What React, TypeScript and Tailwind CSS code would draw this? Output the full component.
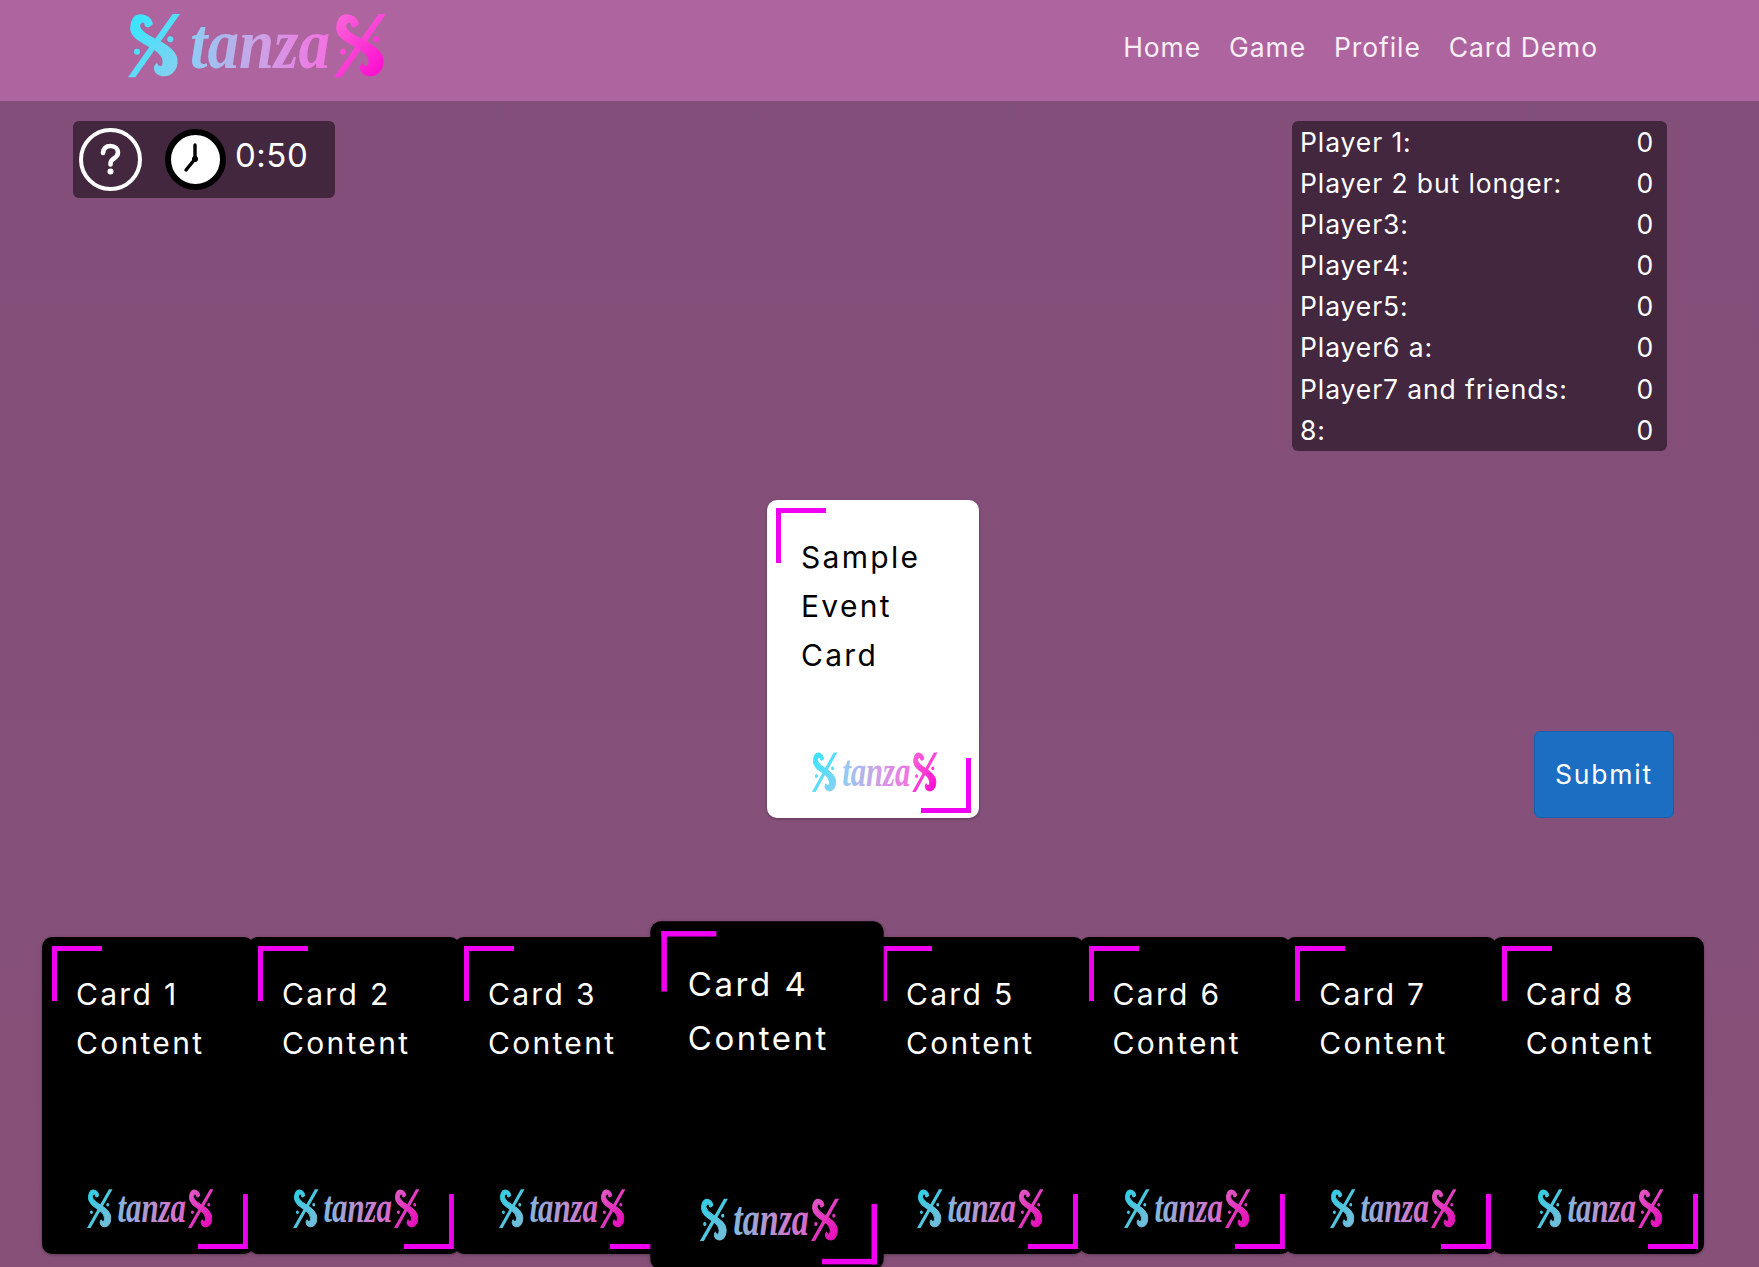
import React, { useId } from "react";

const players: [string, number][] = [
  ["Player 1:", 0],
  ["Player 2 but longer:", 0],
  ["Player3:", 0],
  ["Player4:", 0],
  ["Player5:", 0],
  ["Player6 a:", 0],
  ["Player7 and friends:", 0],
  ["8:", 0],
];

function Sigil({ x, fill }: { x: number; fill: string }) {
  return (
    <g transform={`translate(${x} 0) scale(0.3333)`} fill={fill}>
      <polygon points="134,0 156,0 22,190 0,190" />
      <circle cx="127" cy="76" r="9" />
      <circle cx="27" cy="113" r="9" />
      <path
        transform="translate(-16 -12)"
        stroke={fill}
        strokeWidth="5"
        strokeLinejoin="round"
        d="M88 42 C86 26 70 14 52 15 C34 16 24 36 25 56 C26 84 66 100 96 118 C114 130 126 142 122 162 C120 174 106 174 102 162 C92 172 94 190 118 196 C142 200 164 180 162 150 C160 122 128 104 96 88 C76 78 52 66 50 50 C48 38 62 30 68 40 C66 50 76 54 88 42 Z"
      />
    </g>
  );
}

function Logo({ className }: { className: string }) {
  const id = useId();
  return (
    <svg viewBox="0 -12 259 88" preserveAspectRatio="none" className={className}>
      <defs>
        <linearGradient id={`${id}a`} gradientUnits="userSpaceOnUse" x1="0" y1="20" x2="156" y2="170">
          <stop offset="0" stopColor="#2ee8ff" />
          <stop offset="1" stopColor="#7fd2f2" />
        </linearGradient>
        <linearGradient id={`${id}b`} gradientUnits="userSpaceOnUse" x1="62" y1="0" x2="202" y2="0">
          <stop offset="0" stopColor="#8ecdf4" />
          <stop offset="0.5" stopColor="#cda2e6" />
          <stop offset="1" stopColor="#f470e2" />
        </linearGradient>
        <linearGradient id={`${id}c`} gradientUnits="userSpaceOnUse" x1="0" y1="20" x2="156" y2="170">
          <stop offset="0" stopColor="#fb6cdc" />
          <stop offset="1" stopColor="#ff12d0" />
        </linearGradient>
      </defs>
      <Sigil x={0} fill={`url(#${id}a)`} />
      <Sigil x={206} fill={`url(#${id}c)`} />
      <text
        x="62"
        y="54"
        fill={`url(#${id}b)`}
        fontFamily="'Liberation Serif', serif"
        fontStyle="italic"
        fontWeight="700"
        fontSize="72"
        textLength="140"
        lengthAdjust="spacingAndGlyphs"
      >
        tanza
      </text>
    </svg>
  );
}

function Bracket({ className }: { className: string }) {
  return <div className={`absolute w-[50px] h-[55px] border-[#f000f0] ${className}`} />;
}

function Card({ n, className = "" }: { n: number; className?: string }) {
  return (
    <div
      className={`relative shrink-0 w-[212px] h-[317px] rounded-[10px] bg-black text-white pl-[34px] pt-[33px] shadow-[0_1px_3px_rgba(0,0,0,0.3)] ${className}`}
    >
      <Bracket className="left-[10px] top-[9px] border-l-[5px] border-t-[5px]" />
      <p className="text-[30px] tracking-[2.3px] leading-[49px] w-[165px]">Card {n} Content</p>
      <Logo className="absolute left-[45px] top-[244.7px] w-[127px] h-[53.6px] opacity-90" />
      <Bracket className="right-[6px] bottom-[5px] border-r-[5px] border-b-[5px]" />
    </div>
  );
}

export default function App() {
  return (
    <div
      className="h-screen overflow-hidden flex flex-col bg-gradient-to-b from-[#824f7a] to-[#865078] text-white"
      style={{ fontFamily: "Inter, 'Liberation Sans', sans-serif" }}
    >
      <header className="h-[101px] shrink-0 bg-[#ae649e] flex items-start justify-between pl-[128px] pr-[161px]">
        <Logo className="mt-[2px] w-[259px] h-[88px]" />
        <nav className="flex gap-[28px] pt-[28px] text-[26.5px] tracking-[0.9px] leading-[38px] text-[#f8eef6]">
          <a>Home</a>
          <a>Game</a>
          <a>Profile</a>
          <a>Card Demo</a>
        </nav>
      </header>

      <main className="flex-1 flex flex-col pt-[20px]">
        <section className="flex items-start justify-between pl-[73px] pr-[92px]">
          <div className="w-[262px] h-[77px] rounded-[6px] bg-[#42273f] flex items-start pl-[6px] pt-[7px]">
            <svg viewBox="0 0 63 63" className="w-[63px] h-[63px]">
              <circle cx="31.5" cy="31.5" r="29.5" fill="none" stroke="#fff" strokeWidth="4" />
              <path
                d="M24 25 C24.5 20 27.5 18 31.5 18 C36 18 39 21 39 24.5 C39 28.5 35.5 30 33.5 31.5 C32 32.6 31.5 34 31.5 36.5"
                fill="none"
                stroke="#fff"
                strokeWidth="4.6"
                strokeLinecap="round"
              />
              <circle cx="31.5" cy="43.5" r="3" fill="#fff" />
            </svg>
            <svg viewBox="0 0 61 61" className="ml-[23px] mt-[1px] w-[61px] h-[61px]">
              <circle cx="30.5" cy="30.5" r="27.5" fill="#fff" stroke="#000" strokeWidth="6" />
              <path
                d="M30 16 L30 30 L21 41"
                fill="none"
                stroke="#000"
                strokeWidth="3.4"
                strokeLinecap="round"
                strokeLinejoin="round"
              />
              <circle cx="30" cy="30" r="3" fill="#000" />
            </svg>
            <span className="ml-[9px] mt-[7px] text-[33px] tracking-[0.5px] leading-[40px]">0:50</span>
          </div>

          <div className="w-[375px] h-[330px] rounded-[6px] bg-[#42273f] pl-[8px] pr-[13px] pt-[1px]">
            {players.map(([name, score]) => (
              <div
                key={name}
                className="flex justify-between h-[41.1px] text-[26.5px] tracking-[0.9px] leading-[41px]"
              >
                <span>{name}</span>
                <span>{score}</span>
              </div>
            ))}
          </div>
        </section>

        <section className="mt-[49px] h-[318px] flex items-end pl-[767px] pr-[85px]">
          <div className="relative w-[212px] h-[318px] rounded-[10px] bg-white text-black pl-[34px] pt-[33px] shadow-[0_1px_3px_rgba(0,0,0,0.3)]">
            <Bracket className="left-[9px] top-[8px] border-l-[5px] border-t-[5px]" />
            <p className="text-[30px] tracking-[2.3px] leading-[49px] w-[140px]">Sample Event Card</p>
            <Logo className="absolute left-[45px] top-[244.5px] w-[126px] h-[55px]" />
            <Bracket className="right-[8px] bottom-[5px] border-r-[5px] border-b-[5px]" />
          </div>
          <button className="ml-auto w-[140px] h-[87px] rounded-[6px] bg-[#1b6ec2] border border-[#1861ac] text-white text-[26.5px] tracking-[1.8px]">
            Submit
          </button>
        </section>

        <section className="mt-[119px] flex pl-[42px]">
          <Card n={1} className="mr-[-6px]" />
          <Card n={2} className="mr-[-6px]" />
          <Card n={3} className="mr-[-5px]" />
          <Card n={4} className="scale-110 z-10 mr-[-1px]" />
          <Card n={5} className="mr-[-5.4px]" />
          <Card n={6} className="mr-[-5.4px]" />
          <Card n={7} className="mr-[-5.4px]" />
          <Card n={8} />
        </section>
      </main>
    </div>
  );
}
